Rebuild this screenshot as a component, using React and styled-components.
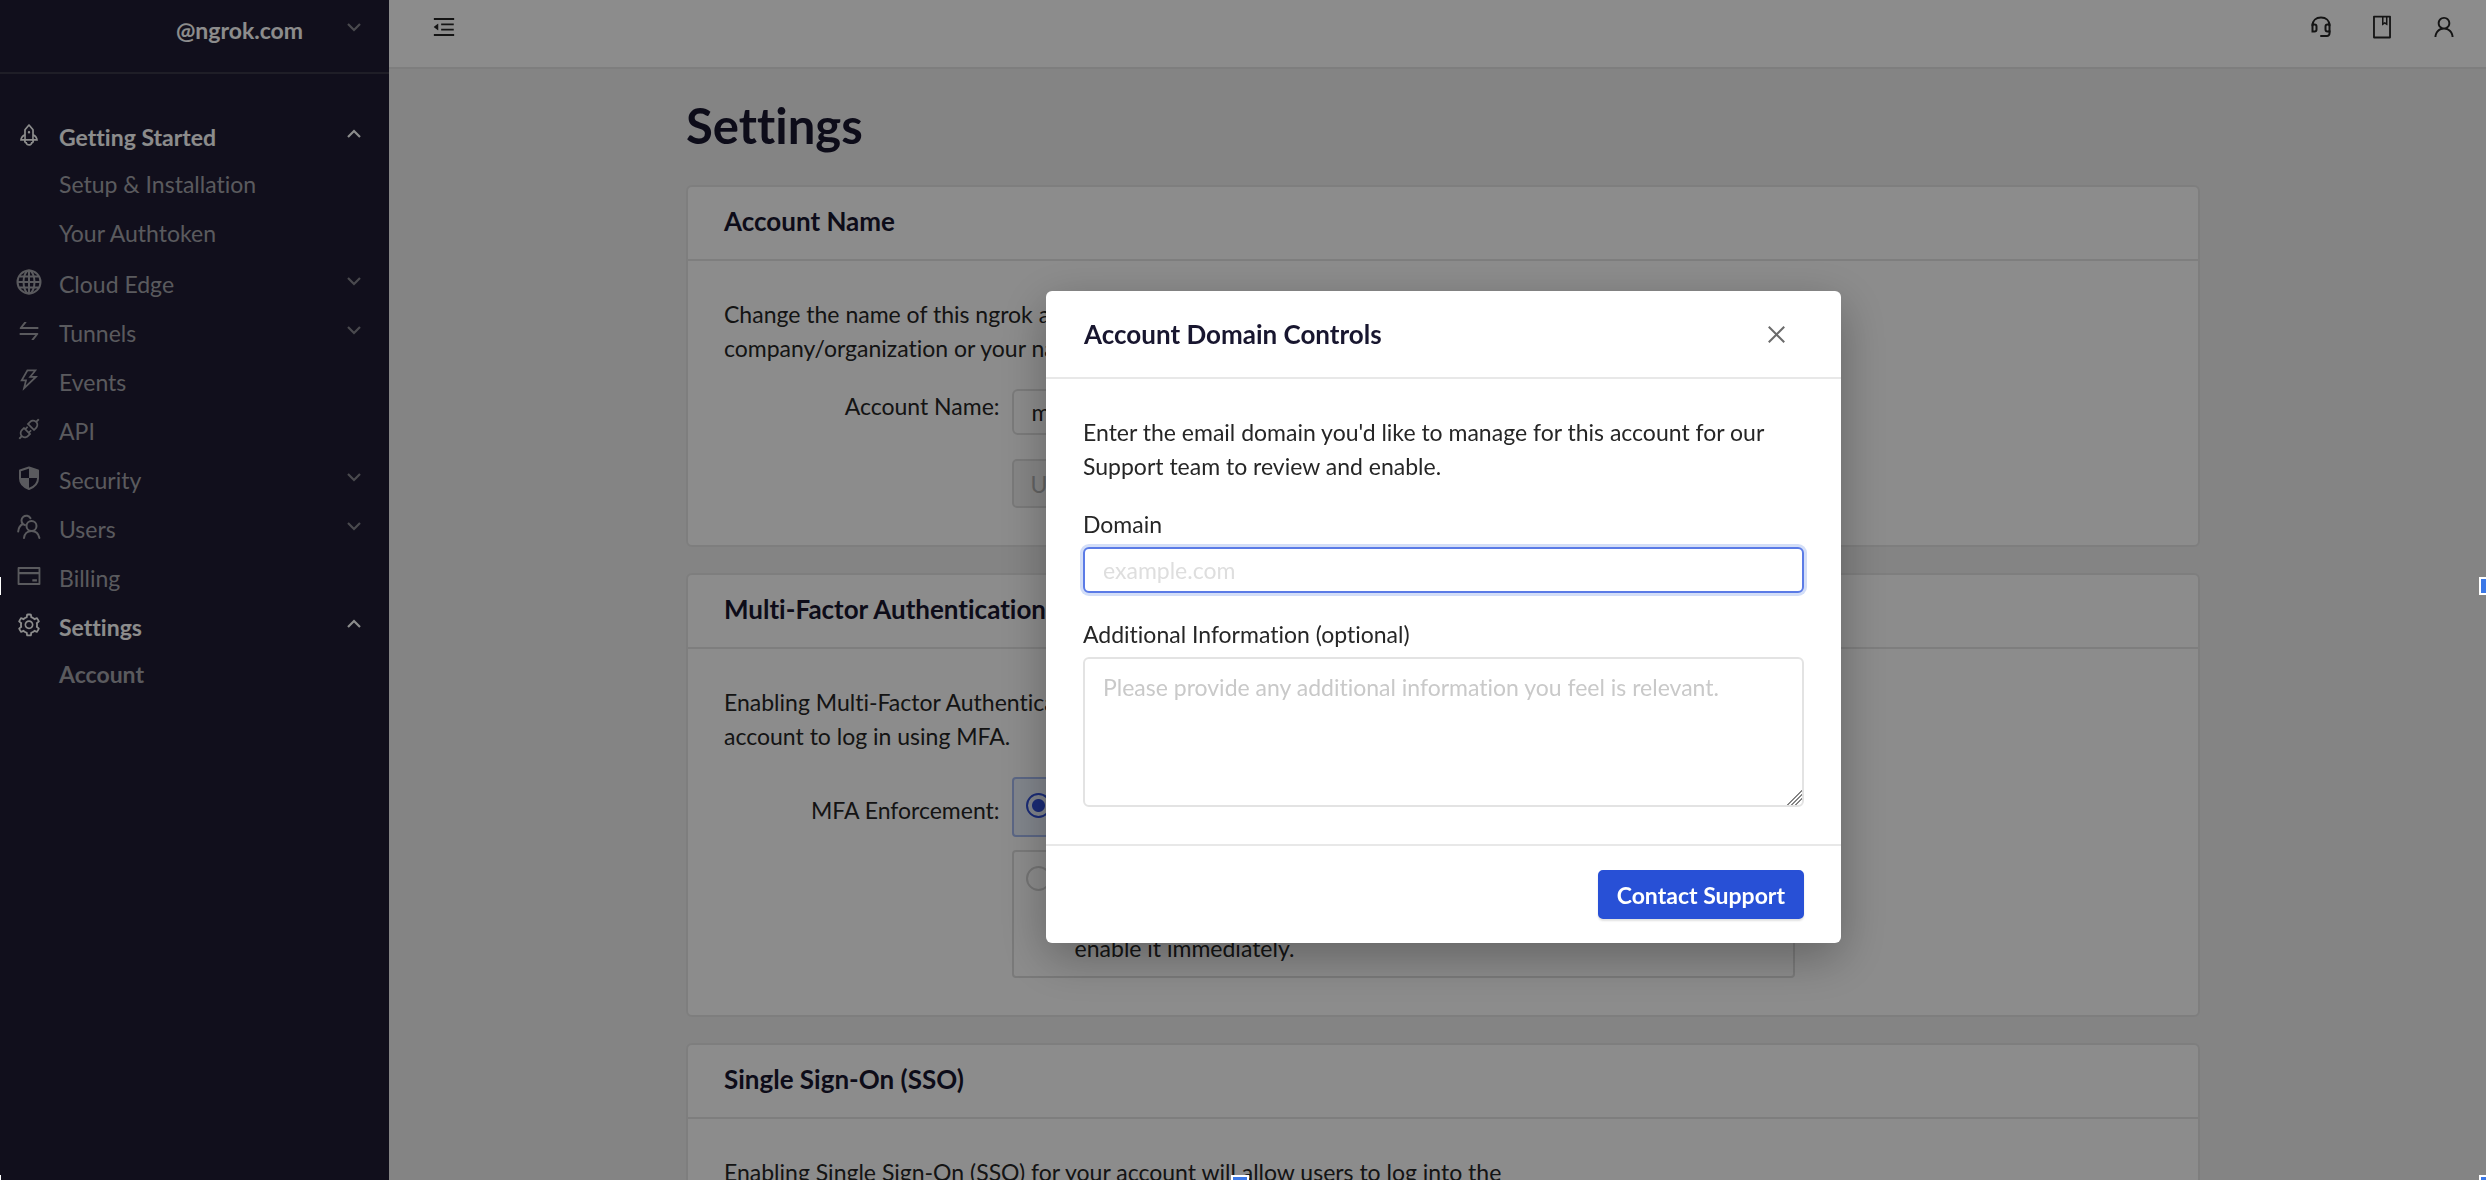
import styled, { createGlobalStyle } from "styled-components"
import {
    AiOutlineApi,
    AiOutlineBook,
    AiOutlineClose,
    AiOutlineCreditCard,
    AiOutlineMenuFold,
    AiOutlineRocket,
    AiOutlineSetting,
    AiOutlineSwap,
    AiOutlineThunderbolt,
    AiOutlineUser,
} from "react-icons/ai"

const GlobalStyle = createGlobalStyle`
    * {
        box-sizing: border-box;
    }
    body {
        margin: 0;
        overflow: hidden;
        background: #f0f0f0;
        color: #262626;
        font-family: Lato, "Open Sans", sans-serif;
        font-size: 23px;
        font-variant-ligatures: none;
        line-height: 34px;
    }
    button, input, textarea {
        font: inherit;
        font-variant-ligatures: none;
        color: inherit;
    }
    h1, h2, p {
        margin: 0;
    }
`

const Page = styled.div`
    display: flex;
    height: 100vh;
    overflow: hidden;
`

const Sidebar = styled.aside`
    flex: none;
    width: 389px;
    background: #1f1d33;
`

const AccountSwitch = styled.button`
    display: flex;
    align-items: center;
    justify-content: flex-end;
    gap: 44px;
    width: 100%;
    height: 74px;
    padding: 0 28px 12px 0;
    border: 0;
    border-bottom: 2px solid #3a3748;
    background: none;
    color: #ffffff;
    font-weight: 700;
`

const Arrow = styled.span`
    display: flex;
    margin-left: auto;
    padding-bottom: 6px;
    color: ${(props) => (props.$active ? "#ffffff" : "#87868f")};
`

const SwitchArrow = styled(Arrow)`
    margin-left: 0;
`

const Nav = styled.nav`
    padding-top: 38px;
`

const NavItem = styled.a`
    display: flex;
    align-items: center;
    height: 49px;
    padding: ${(props) => (props.$sub ? "0 28px 3px 59px" : "0 28px 0 16px")};
    color: ${(props) => (props.$active ? "#ffffff" : "#a5a4ab")};
    font-weight: ${(props) => (props.$bold ? 700 : 400)};
    text-decoration: none;
`

const NavIcon = styled.span`
    display: flex;
    width: 43px;
    padding-bottom: 4px;
`

const Main = styled.main`
    flex: 1;
    min-width: 0;
`

const TopBar = styled.header`
    display: flex;
    align-items: center;
    gap: 36px;
    height: 69px;
    padding: 0 29px 14px 42px;
    border-bottom: 2px solid #e6e6e6;
    background: #ffffff;
`

const IconButton = styled.button`
    display: flex;
    padding: 0;
    border: 0;
    background: none;
    color: #262626;

    &:first-child {
        margin-right: auto;
    }
`

const Content = styled.div`
    display: grid;
    gap: 26px;
    max-width: 1514px;
    margin: 0 auto;
    padding-top: 25px;
`

const ContentArea = styled.div`
    padding-left: 11px;
`

const PageTitle = styled.h1`
    padding-bottom: 2px;
    color: #18162f;
    font-size: 49px;
    font-weight: 700;
    line-height: 63px;
`

const Card = styled.section`
    border: 2px solid #e6e6e6;
    border-radius: 6px;
    background: #ffffff;
`

const CardTitle = styled.h2`
    padding: 16px 36px 19px;
    border-bottom: 2px solid #e6e6e6;
    color: #18162f;
    font-size: 26px;
    font-weight: 700;
    line-height: 37px;
`

const CardBody = styled.div`
    padding: 36px 36px 37px;
`

const FormRow = styled.div`
    display: grid;
    grid-template-columns: 20% minmax(0, 783px);
    margin-top: 24px;
`

const RowLabel = styled.label`
    padding: ${(props) => (props.$tall ? "16px" : "0")} 12px 0 0;
    text-align: right;
`

const Fields = styled.div`
    display: grid;
    justify-items: start;
    gap: ${(props) => props.$gap};
`

const TextInput = styled.input`
    width: 100%;
    height: 46px;
    padding: 0 18px;
    border: 2px solid #e0e0e0;
    border-radius: 6px;
    outline: 0;
    background: #ffffff;

    &::placeholder {
        color: #dedede;
    }
    &:focus {
        border-color: #5b7be6;
        box-shadow: 0 0 0 3px #d3def8;
    }
`

const Button = styled.button`
    height: 49px;
    padding: 0 17px;
    border: 2px solid #2850d6;
    border-radius: 5px;
    background: #2850d6;
    color: #ffffff;
    font-weight: 700;
    line-height: 30px;
    box-shadow: 0 2px 2px rgba(0, 0, 0, 0.12);

    &:disabled {
        border-color: #dedede;
        background: #f4f4f4;
        color: #b4b4b4;
        font-weight: 400;
        box-shadow: none;
    }
`

const Option = styled.label`
    display: flex;
    align-items: flex-start;
    gap: 24px;
    width: 100%;
    padding: 11px 12px;
    border: 2px solid ${(props) => (props.$checked ? "#a6bbf2" : "#dedede")};
    border-radius: 4px;
    background: ${(props) => (props.$checked ? "#ecf3ff" : "#ffffff")};
`

const Radio = styled.input`
    flex: none;
    appearance: none;
    width: 25px;
    height: 25px;
    margin: 3px 0 0;
    border: 2px solid #d4d4d4;
    border-radius: 50%;

    &:checked {
        border-color: #2f4fd8;
        background: radial-gradient(circle, #2f4fd8 6px, transparent 7px);
    }
`

const Mask = styled.div`
    position: fixed;
    inset: 0;
    display: flex;
    align-items: flex-start;
    justify-content: center;
    padding: 291px 0 0 401px;
    background: rgba(0, 0, 0, 0.45);
`

const Modal = styled.section`
    width: 795px;
    border-radius: 6px;
    background: #ffffff;
    box-shadow: 0 14px 48px rgba(0, 0, 0, 0.3);
`

const ModalHeader = styled.header`
    display: flex;
    align-items: center;
    justify-content: space-between;
    height: 88px;
    padding: 0 52px 0 38px;
    border-bottom: 2px solid #e8e8e8;
`

const ModalTitle = styled.h2`
    color: #18162f;
    font-size: 26px;
    font-weight: 700;
`

const CloseButton = styled(IconButton)`
    color: #6b6b6b;
`

const ModalBody = styled.form`
    display: grid;
    gap: 24px;
    padding: 36px 37px 37px;
`

const Field = styled.div`
    display: grid;
    gap: 6px;
`

const TextArea = styled.textarea`
    display: block;
    width: 100%;
    height: 150px;
    padding: 11px 18px;
    border: 2px solid #e3e3e3;
    border-radius: 6px;
    outline: 0;

    &::placeholder {
        color: #c9c9c9;
    }
    &::-webkit-scrollbar {
        width: 20px;
        height: 20px;
    }
    &::-webkit-resizer {
        background: linear-gradient(
            135deg,
            transparent 50%,
            #858585 50% 55%,
            transparent 55% 63%,
            #858585 63% 68%,
            transparent 68% 76%,
            #858585 76% 81%,
            transparent 81%
        );
    }
`

const ModalFooter = styled.footer`
    display: flex;
    justify-content: flex-end;
    padding: 24px 37px;
    border-top: 2px solid #e8e8e8;
`

const Handle = styled.i`
    position: fixed;
    width: 18px;
    height: 18px;
    border: 2px solid #ffffff;
    background: #3b78e7;
    left: ${(props) => props.$left};
    top: ${(props) => props.$top};
`

function Chevron({ up }) {
    return (
        <svg width="14" height="10" viewBox="0 0 14 10" fill="none" stroke="currentColor" strokeWidth="2.2">
            <path d={up ? "M1 8l6-6 6 6" : "M1 2l6 6 6-6"} />
        </svg>
    )
}

function GlobeIcon() {
    return (
        <svg width="26" height="26" viewBox="0 0 26 26" fill="none" stroke="currentColor" strokeWidth="2">
            <circle cx="13" cy="13" r="11.5" />
            <ellipse cx="13" cy="13" rx="5.5" ry="11.5" />
            <path d="M13 1.5v23M1.5 13h23M3.5 7.5h19M3.5 18.5h19" />
        </svg>
    )
}

function ShieldIcon() {
    return (
        <svg width="26" height="26" viewBox="0 0 26 26">
            <path
                d="M13 2.5 22 5.5v8c0 5-4 8.6-9 10.5-5-1.9-9-5.5-9-10.5v-8z"
                fill="none"
                stroke="currentColor"
                strokeWidth="2"
                strokeLinejoin="round"
            />
            <path d="M13 2.5 22 5.5V13h-9zM4 13h9v11c-5-1.9-9-5.5-9-10.5z" fill="currentColor" />
        </svg>
    )
}

function UsersIcon() {
    return (
        <svg width="26" height="26" viewBox="0 0 26 26" fill="none" stroke="currentColor" strokeWidth="2" strokeLinecap="round">
            <circle cx="15.5" cy="12" r="5" />
            <path d="M8 24c.4-4 3.3-7 7.5-7s7.1 3 7.900 7" />
            <path d="M14.5 4.200A4.800 4.800 0 1 0 7 10M7 10c-2.800 1.200-4.500 4-4.800 7.500M7 10c.6.5 1.200.8 2 1" />
        </svg>
    )
}

function HeadsetIcon() {
    return (
        <svg width="24" height="24" viewBox="0 0 24 24" fill="none" stroke="currentColor" strokeWidth="2" strokeLinecap="round">
            <path d="M3.5 10.5C3.5 5.5 7 2.500 12 2.500s8.500 3 8.500 8" />
            <path d="M3.500 9.500h2a2 2 0 0 1 2 2v3a2 2 0 0 1-2 2h-2zM20.500 9.500h-2a2 2 0 0 0-2 2v3a2 2 0 0 0 2 2h2z" />
            <path d="M20.500 16v2.500a2.500 2.500 0 0 1-2.500 2.500h-6" />
        </svg>
    )
}

const menu = [
    { label: "Getting Started", icon: <AiOutlineRocket size={26} />, arrow: "up", active: true, bold: true },
    { label: "Setup & Installation", sub: true },
    { label: "Your Authtoken", sub: true },
    { label: "Cloud Edge", icon: <GlobeIcon />, arrow: "down" },
    { label: "Tunnels", icon: <AiOutlineSwap size={26} />, arrow: "down" },
    { label: "Events", icon: <AiOutlineThunderbolt size={26} /> },
    { label: "API", icon: <AiOutlineApi size={26} /> },
    { label: "Security", icon: <ShieldIcon />, arrow: "down" },
    { label: "Users", icon: <UsersIcon />, arrow: "down" },
    { label: "Billing", icon: <AiOutlineCreditCard size={26} /> },
    { label: "Settings", icon: <AiOutlineSetting size={26} />, arrow: "up", active: true, bold: true },
    { label: "Account", sub: true, bold: true },
]

export default function App() {
    return (
        <>
            <GlobalStyle />
            <Page>
                <Sidebar>
                    <AccountSwitch>
                        @ngrok.com
                        <SwitchArrow><Chevron /></SwitchArrow>
                    </AccountSwitch>
                    <Nav>
                        {menu.map((item) => (
                            <NavItem key={item.label} href="#" $sub={item.sub} $active={item.active} $bold={item.bold}>
                                {item.icon && <NavIcon>{item.icon}</NavIcon>}
                                {item.label}
                                {item.arrow && (
                                    <Arrow $active={item.active}>
                                        <Chevron up={item.arrow === "up"} />
                                    </Arrow>
                                )}
                            </NavItem>
                        ))}
                    </Nav>
                </Sidebar>
                <Main>
                    <TopBar>
                        <IconButton aria-label="Collapse menu"><AiOutlineMenuFold size={26} /></IconButton>
                        <IconButton aria-label="Support"><HeadsetIcon /></IconButton>
                        <IconButton aria-label="Docs"><AiOutlineBook size={26} /></IconButton>
                        <IconButton aria-label="Profile"><AiOutlineUser size={26} /></IconButton>
                    </TopBar>
                    <ContentArea>
                        <Content>
                            <PageTitle>Settings</PageTitle>
                            <Card>
                                <CardTitle>Account Name</CardTitle>
                                <CardBody>
                                    <p>
                                        Change the name of this ngrok account to your
                                        <br />
                                        company/organization or your name.
                                    </p>
                                    <FormRow>
                                        <RowLabel htmlFor="account-name">Account Name:</RowLabel>
                                        <Fields $gap="24px">
                                            <TextInput id="account-name" defaultValue="my account" />
                                            <Button disabled>Update</Button>
                                        </Fields>
                                    </FormRow>
                                </CardBody>
                            </Card>
                            <Card>
                                <CardTitle>Multi-Factor Authentication</CardTitle>
                                <CardBody>
                                    <p>
                                        Enabling Multi-Factor Authentication will require users of this
                                        <br />
                                        account to log in using MFA.
                                    </p>
                                    <FormRow>
                                        <RowLabel as="span" $tall>MFA Enforcement:</RowLabel>
                                        <Fields $gap="13px">
                                            <Option $checked>
                                                <Radio type="radio" name="mfa" defaultChecked />
                                                <span>Optional</span>
                                            </Option>
                                            <Option>
                                                <Radio type="radio" name="mfa" />
                                                <span>
                                                    Required
                                                    <br />
                                                    Users without MFA will be asked to
                                                    <br />
                                                    enable it immediately.
                                                </span>
                                            </Option>
                                        </Fields>
                                    </FormRow>
                                </CardBody>
                            </Card>
                            <Card>
                                <CardTitle>Single Sign-On (SSO)</CardTitle>
                                <CardBody>
                                    <p>Enabling Single Sign-On (SSO) for your account will allow users to log into the</p>
                                </CardBody>
                            </Card>
                        </Content>
                    </ContentArea>
                </Main>
            </Page>
            <Mask>
                <Modal role="dialog" aria-labelledby="modal-title">
                    <ModalHeader>
                        <ModalTitle id="modal-title">Account Domain Controls</ModalTitle>
                        <CloseButton aria-label="Close"><AiOutlineClose size={25} /></CloseButton>
                    </ModalHeader>
                    <ModalBody>
                        <p>
                            Enter the email domain you'd like to manage for this account for our
                            <br />
                            Support team to review and enable.
                        </p>
                        <Field>
                            <label htmlFor="domain">Domain</label>
                            <TextInput id="domain" placeholder="example.com" autoFocus />
                        </Field>
                        <Field>
                            <label htmlFor="info">Additional Information (optional)</label>
                            <TextArea id="info" placeholder="Please provide any additional information you feel is relevant." />
                        </Field>
                    </ModalBody>
                    <ModalFooter>
                        <Button>Contact Support</Button>
                    </ModalFooter>
                </Modal>
            </Mask>
            <Handle $left="-17px" $top="577px" />
            <Handle $left="calc(100% - 7px)" $top="577px" />
            <Handle $left="-17px" $top="calc(100% - 5px)" />
            <Handle $left="calc(50% - 12px)" $top="calc(100% - 5px)" />
            <Handle $left="calc(100% - 7px)" $top="calc(100% - 5px)" />
        </>
    )
}
